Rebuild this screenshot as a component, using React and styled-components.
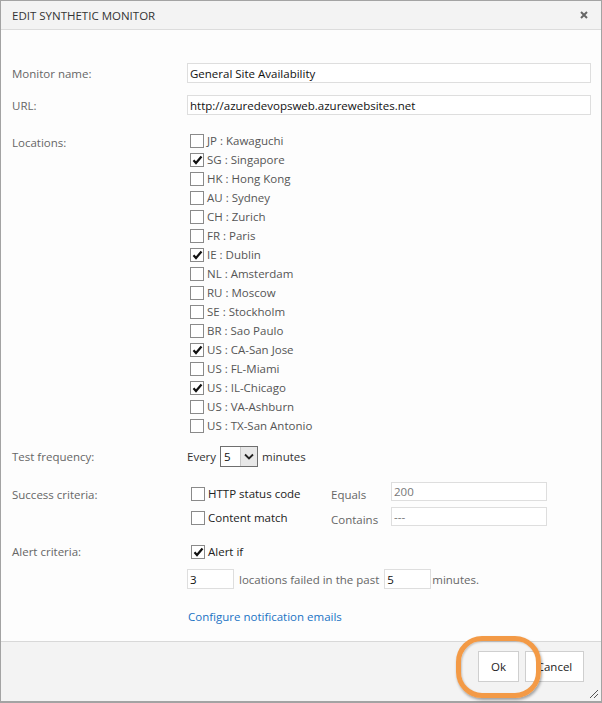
import React from 'react';
import styled, { createGlobalStyle } from 'styled-components';

const Global = createGlobalStyle`
*, *::before, *::after {
    box-sizing:border-box;
}
html, body {
    margin:0;
    padding:0;
    background:#fff;
}
body{
    font-family:"Open Sans", "Noto Sans", Arial, sans-serif;
    font-size:11.5px;
    color:#555;
}
`

const Dialog = styled.div`
position:relative;
width:602px;
height:703px;
border:1px solid #a3a3a3;
border-bottom-width:2px;
display:flex;
flex-direction:column;
background:#fdfdfd;
`
const TitleBar = styled.div`
height:29px;
flex:none;
display:flex;
align-items:center;
justify-content:space-between;
padding:0 12px 0 11px;
background:#f3f3f3;
border-bottom:1px solid #dcdcdc;
`
const Title = styled.h1`
margin:0;
font-size:11.5px;
font-weight:400;
color:#333;
`
const Close = styled.span`
width:10px;
height:10px;
display:flex;
`
const Body = styled.div`
flex:1;
padding:33px 10px 0 11px;
display:flex;
flex-direction:column;
`
const Row = styled.div`
display:grid;
grid-template-columns:175px 1fr;
align-items:${p => p.$top ? 'start' : 'center'};
margin-top:${p => p.$mt || 0}px;
`
const Label = styled.label`
color:#666;
line-height:19px;
padding-top:${p => p.$pt || 0}px;
`
const TextInput = styled.input`
height:${p => p.$h || 20}px;
width:${p => p.$w ? p.$w + 'px' : '100%'};
border:1px solid #dedede;
background:#fff;
padding:0 2px;
font:inherit;
font-size:11.5px;
color:${p => p.$dim ? '#777' : '#111'};
outline:none;
`
const LocationList = styled.div`
display:flex;
flex-direction:column;
padding-left:3px;
`
const CheckRow = styled.label`
display:flex;
align-items:center;
height:19px;
gap:3px;
color:#555;
`
const Box = styled.span`
width:14px;
height:14px;
flex:none;
border:1px solid #8a8a8a;
background:#fff;
display:flex;
align-items:center;
justify-content:center;
`
const Inline = styled.div`
display:flex;
align-items:center;
gap:${p => p.$gap || 4}px;
color:${p => p.$dark ? '#333' : '#666'};
`
const Select = styled.div`
width:38px;
height:21px;
border:1px solid #6f6f6f;
display:flex;
align-items:stretch;
background:#fff;
color:#111;
span{
    flex:1;
    padding-left:3px;
    line-height:19px;
}
`
const SelectButton = styled.div`
width:17px;
background:#e8e8e8;
border-left:1px solid #c8c8c8;
display:flex;
align-items:center;
justify-content:center;
`
const CriteriaGrid = styled.div`
display:grid;
grid-template-columns:140px 60px 156px;
grid-template-rows:19px 19px;
row-gap:6px;
align-items:start;
padding-left:4px;
`
const Sub = styled.span`
color:#666;
line-height:16px;
padding-top:${p => p.$pt || 0}px;
`
const CheckLabel = styled.label`
display:flex;
align-items:center;
gap:3px;
line-height:16px;
padding-top:${p => p.$pt || 0}px;
color:${p => p.$dark ? '#222' : '#444'};
`
const Link = styled.a`
color:#1a73c4;
text-decoration:none;
line-height:17px;
padding-left:1px;
`
const Footer = styled.div`
position:relative;
height:60px;
flex:none;
border-top:1px solid #d8d8d8;
background:#f3f3f3;
display:flex;
justify-content:flex-end;
align-items:flex-start;
gap:6px;
padding:9px 17px 0 0;
`
const Button = styled.button`
height:31px;
min-width:${p => p.$w}px;
border:1px solid #cfcfcf;
background:#fff;
font:inherit;
font-size:11.5px;
color:#222;
padding:0 8px;
`
const Highlight = styled.div`
position:absolute;
left:455px;
top:-6px;
width:85px;
height:62px;
border:5px solid #f39a46;
border-radius:26px;
box-shadow:1px 2px 3px rgba(0,0,0,0.35), inset 1px 1px 2px rgba(0,0,0,0.2);
pointer-events:none;
`
const Grip = styled.svg`
position:absolute;
right:2px;
bottom:2px;
`

const locations = [
    ['JP : Kawaguchi', false],
    ['SG : Singapore', true],
    ['HK : Hong Kong', false],
    ['AU : Sydney', false],
    ['CH : Zurich', false],
    ['FR : Paris', false],
    ['IE : Dublin', true],
    ['NL : Amsterdam', false],
    ['RU : Moscow', false],
    ['SE : Stockholm', false],
    ['BR : Sao Paulo', false],
    ['US : CA-San Jose', true],
    ['US : FL-Miami', false],
    ['US : IL-Chicago', true],
    ['US : VA-Ashburn', false],
    ['US : TX-San Antonio', false],
]

const Check = ({ on }) => (
    <Box>
        {on && (
            <svg width="11" height="10" viewBox="0 0 11 10">
                <path d="M1.5 5.2 L4 8 L9.5 1.5" fill="none" stroke="#111" strokeWidth="2.2" />
            </svg>
        )}
    </Box>
)

export default function App() {
    return (
        <>
            <Global />
            <Dialog>
                <TitleBar>
                    <Title>EDIT SYNTHETIC MONITOR</Title>
                    <Close>
                        <svg width="10" height="10" viewBox="0 0 10 10">
                            <path d="M2 2 L8 8 M8 2 L2 8" stroke="#666" strokeWidth="2" />
                        </svg>
                    </Close>
                </TitleBar>
                <Body>
                    <Row>
                        <Label>Monitor name:</Label>
                        <TextInput defaultValue="General Site Availability" />
                    </Row>
                    <Row $mt={12}>
                        <Label>URL:</Label>
                        <TextInput defaultValue="http://azuredevopsweb.azurewebsites.net" />
                    </Row>
                    <Row $mt={16} $top>
                        <Label $pt={2}>Locations:</Label>
                        <LocationList>
                            {locations.map(([name, on]) => (
                                <CheckRow key={name}>
                                    <Check on={on} />
                                    {name}
                                </CheckRow>
                            ))}
                        </LocationList>
                    </Row>
                    <Row $mt={11}>
                        <Label>Test frequency:</Label>
                        <Inline $dark>
                            Every
                            <Select>
                                <span>5</span>
                                <SelectButton>
                                    <svg width="10" height="7" viewBox="0 0 10 7">
                                        <path d="M1 1.5 L5 5.5 L9 1.5" fill="none" stroke="#222" strokeWidth="1.8" />
                                    </svg>
                                </SelectButton>
                            </Select>
                            minutes
                        </Inline>
                    </Row>
                    <Row $mt={15} $top>
                        <Label $pt={3}>Success criteria:</Label>
                        <CriteriaGrid>
                            <CheckLabel $dark $pt={4}><Check />HTTP status code</CheckLabel>
                            <Sub $pt={5}>Equals</Sub>
                            <TextInput $dim $h={19} defaultValue="200" />
                            <CheckLabel $dark $pt={3}><Check />Content match</CheckLabel>
                            <Sub $pt={5}>Contains</Sub>
                            <TextInput $dim $h={19} defaultValue="---" />
                        </CriteriaGrid>
                    </Row>
                    <Row $mt={16}>
                        <Label>Alert criteria:</Label>
                        <div style={{ paddingLeft: 4 }}>
                            <CheckLabel $dark><Check on />Alert if</CheckLabel>
                        </div>
                    </Row>
                    <Row $mt={8}>
                        <span />
                        <Inline $gap={5}>
                            <TextInput $w={47} defaultValue="3" />
                            locations failed in the past
                            <TextInput $w={47} defaultValue="5" />
                            <span style={{ marginLeft: -4 }}>minutes.</span>
                        </Inline>
                    </Row>
                    <Row $mt={19}>
                        <span />
                        <Link href="#">Configure notification emails</Link>
                    </Row>
                </Body>
                <Footer>
                    <Button $w={41}>Ok</Button>
                    <Button $w={59}>Cancel</Button>
                    <Highlight />
                    <Grip width="11" height="11" viewBox="0 0 11 11">
                        <path d="M10 2 L2 10 M10 6 L6 10" stroke="#555" strokeWidth="1" />
                    </Grip>
                </Footer>
            </Dialog>
        </>
    );
}
